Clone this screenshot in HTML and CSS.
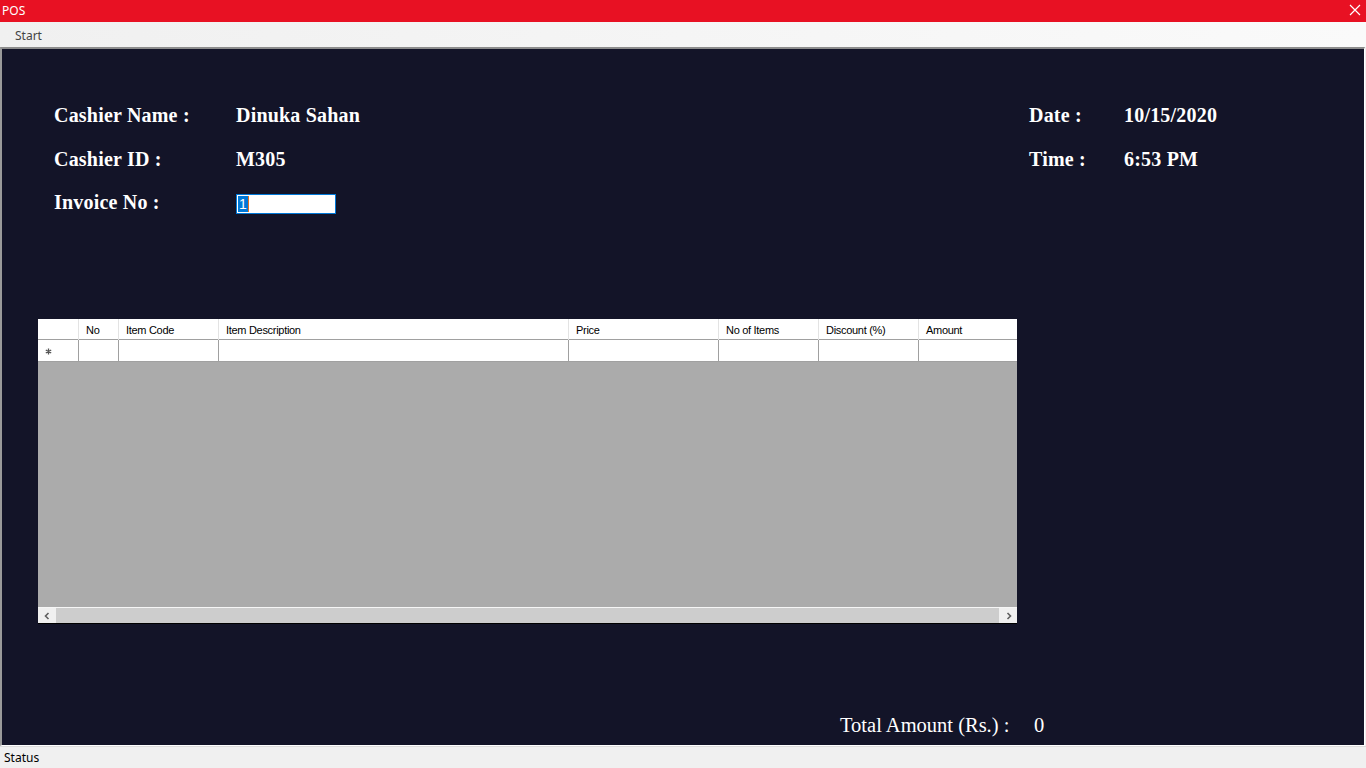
FILE: index.html
```html
<!DOCTYPE html>
<html lang="en">
<head>
<meta charset="utf-8">
<title>POS</title>
<link rel="stylesheet" href="styles.css">
</head>
<body>
<div class="app">
  <div class="titlebar">
    <span class="title">POS</span>
    <svg class="close" width="12" height="12" viewBox="0 0 12 12"><path d="M1 1 L11 11 M11 1 L1 11" stroke="#fff" stroke-width="1.2" fill="none"/></svg>
  </div>
  <div class="menubar"><span class="menu-item">Start</span></div>
  <main class="panel">
    <section class="info">
      <div class="lbl">Cashier Name :</div>
      <div class="val">Dinuka Sahan</div>
      <div class="lbl">Date :</div>
      <div class="val">10/15/2020</div>
      <div class="lbl">Cashier ID :</div>
      <div class="val">M305</div>
      <div class="lbl">Time :</div>
      <div class="val">6:53 PM</div>
      <div class="lbl">Invoice No :</div>
      <div class="val"><div class="input"><span class="sel">1</span><span class="caret"></span></div></div>
    </section>

    <section class="grid">
      <div class="row head">
        <div class="cell rh"></div>
        <div class="cell">No</div>
        <div class="cell">Item Code</div>
        <div class="cell">Item Description</div>
        <div class="cell">Price</div>
        <div class="cell">No of Items</div>
        <div class="cell">Discount (%)</div>
        <div class="cell last">Amount</div>
      </div>
      <div class="row newrow">
        <div class="cell rh"><svg width="7" height="7" viewBox="0 0 7 7"><path d="M3.5 0.5 V6.5 M0.8 2 L6.2 5 M6.2 2 L0.8 5" stroke="#555" stroke-width="1.3" fill="none"/></svg></div>
        <div class="cell"></div>
        <div class="cell"></div>
        <div class="cell"></div>
        <div class="cell"></div>
        <div class="cell"></div>
        <div class="cell"></div>
        <div class="cell last"></div>
      </div>
      <div class="empty"></div>
      <div class="hscroll">
        <div class="arrow"><svg width="8" height="8" viewBox="0 0 8 8"><path d="M5.5 1 L2.5 4 L5.5 7" stroke="#606060" stroke-width="1.6" fill="none"/></svg></div>
        <div class="track"><div class="thumb"></div></div>
        <div class="arrow"><svg width="8" height="8" viewBox="0 0 8 8"><path d="M2.5 1 L5.5 4 L2.5 7" stroke="#606060" stroke-width="1.6" fill="none"/></svg></div>
      </div>
    </section>

    <section class="total">
      <div class="total-lbl">Total Amount (Rs.) :</div>
      <div class="total-val">0</div>
    </section>
  </main>
  <footer class="status">Status</footer>
</div>
</body>
</html>
```

FILE: styles.css
```css
* { box-sizing: border-box; }
html, body { margin: 0; padding: 0; }
body {
  width: 1366px;
  height: 768px;
  overflow: hidden;
  background: #f0f0f0;
  font-family: "Noto Sans", "Liberation Sans", sans-serif;
}
.app {
  display: flex;
  flex-direction: column;
  height: 768px;
}
.titlebar {
  height: 22px;
  background: #e81123;
  display: flex;
  align-items: center;
  justify-content: space-between;
  padding: 0 5px 1px 2px;
  color: #fff;
  font-size: 12px;
}
.title { line-height: 22px; }
.close { display: block; margin-bottom: 1px; }
.menubar {
  height: 25px;
  background: linear-gradient(to right, #f0f0f0, #fafafa);
  display: flex;
  align-items: center;
  padding-left: 15px;
  font-size: 12px;
  color: #444;
}
.menu-item { line-height: 25px; padding-top: 1px; }
.panel {
  flex: 1;
  display: flex;
  flex-direction: column;
  background: #131428;
  border-top: 2px solid #8c8c8c;
  border-left: 2px solid #9a9a9a;
  border-right: 1px solid #ffffff;
  border-bottom: 1px solid #ffffff;
  margin-right: 1px;
  padding-top: 44px;
}
.info {
  display: grid;
  grid-template-columns: 182px 793px 95px auto;
  grid-template-rows: 44px 44px 42px;
  align-items: center;
  margin-left: 52px;
  color: #ffffff;
  font-family: "Liberation Serif", "Times New Roman", serif;
  font-weight: bold;
  font-size: 20px;
  line-height: 24px;
  letter-spacing: 0.2px;
}
.input {
  width: 100px;
  height: 20px;
  background: #fff;
  border: 1px solid #0078d7;
  margin-top: 3px;
  display: flex;
  align-items: center;
  padding-left: 1px;
  font-family: "Liberation Sans", sans-serif;
  font-weight: normal;
  font-size: 14px;
  line-height: 16px;
  letter-spacing: 0;
}
.sel {
  background: #0078d7;
  color: #fff;
  padding: 0 1px;
  height: 16px;
}
.caret {
  width: 1px;
  height: 16px;
  background: #e07020;
}
.grid {
  margin: 96px 0 0 36px;
  width: 979px;
  display: flex;
  flex-direction: column;
  font-family: "Liberation Sans", Arial, sans-serif;
  font-size: 11px;
  letter-spacing: -0.3px;
  color: #000;
}
.row {
  display: grid;
  grid-template-columns: 41px 40px 100px 350px 150px 100px 100px 1fr;
  background: #fff;
}
.head {
  height: 21px;
  border-bottom: 1px solid #a0a0a0;
}
.head .cell {
  border-right: 1px solid #e3e3e3;
  padding: 1px 0 0 7px;
  line-height: 20px;
}
.newrow {
  height: 22px;
  border-bottom: 1px solid #a0a0a0;
}
.newrow .cell {
  border-right: 1px solid #a0a0a0;
}
.newrow .rh {
  display: flex;
  align-items: center;
  padding-left: 7px;
  padding-top: 2px;
}
.cell.last { border-right: none; }
.empty {
  height: 245px;
  background: #ababab;
}
.hscroll {
  height: 17px;
  display: flex;
  background: #f0f0f0;
  border-top: 1px solid #f6f6f6;
  border-bottom: 1px solid #000;
}
.arrow {
  width: 17px;
  display: flex;
  align-items: center;
  justify-content: center;
}
.track {
  flex: 1;
  display: flex;
  padding: 0 1px;
}
.thumb {
  flex: 1;
  background: #cdcdcd;
}
.total {
  margin-top: auto;
  margin-left: 838px;
  margin-bottom: 8px;
  display: grid;
  grid-template-columns: 194px auto;
  color: #fff;
  font-family: "Liberation Serif", "Times New Roman", serif;
  font-size: 20.5px;
  line-height: 24px;
}
.status {
  height: 22px;
  border-top: 1px solid #dcdcdc;
  background: #f0f0f0;
  padding-left: 4px;
  font-size: 12px;
  line-height: 21px;
  color: #000;
}
```
